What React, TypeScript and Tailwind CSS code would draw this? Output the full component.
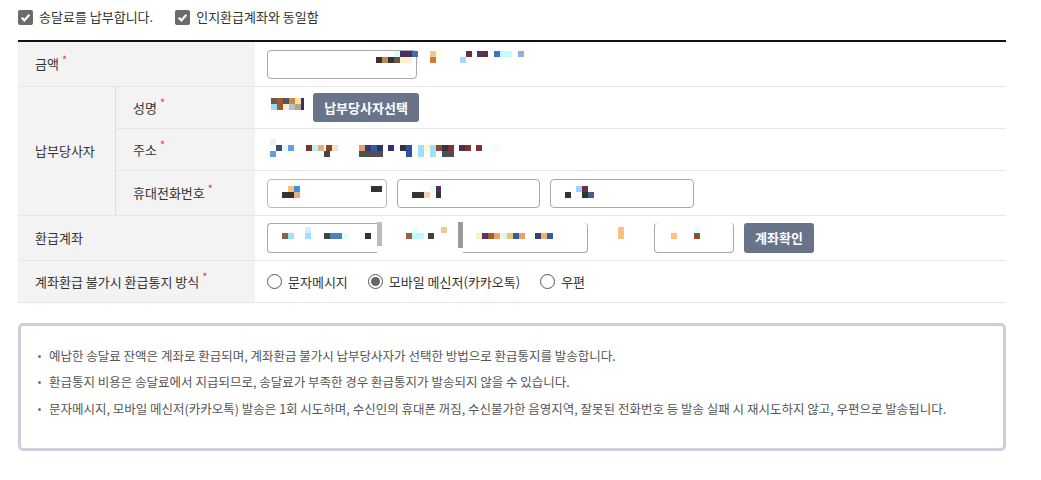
import React from 'react';

type Cell = [number, number, number, string];

// pixelated (masked) personal data, coordinates relative to the content cell
function Mosaic({ cells }: { cells: Cell[] }) {
    return (
        <svg className="absolute inset-0 w-full h-full pointer-events-none" overflow="visible">
            {cells.map(([x, y, w, c], i) => (
                <rect key={i} x={x} y={y} width={w} height={6} fill={c} />
            ))}
        </svg>
    );
}

function Req() {
    return <span className="text-[#e03a3a] text-[11px] ml-[3px] relative -top-[5px]">*</span>;
}

function Check({ label }: { label: string }) {
    return (
        <label className="flex items-center gap-[6px]">
            <span className="shrink-0 w-[15px] h-[15px] rounded-[2px] bg-[#6b6b6b] flex items-center justify-center">
                <svg width="11" height="11" viewBox="0 0 10 10">
                    <path d="M1.5 5.2 L4 7.6 L8.5 2.5" fill="none" stroke="#fff" strokeWidth="2" />
                </svg>
            </span>
            <span>{label}</span>
        </label>
    );
}

function Radio({ label, checked }: { label: string; checked?: boolean }) {
    return (
        <label className="flex items-center gap-[6px] mr-5">
            <span className="shrink-0 w-[15px] h-[15px] rounded-full border border-[#555] bg-white flex items-center justify-center">
                {checked && <span className="w-[9px] h-[9px] rounded-full bg-[#666]" />}
            </span>
            <span>{label}</span>
        </label>
    );
}

const amountCells: Cell[] = [
    [139, 9, 6, '#d8fcff'], [145, 9, 12, '#4a3060'], [157, 9, 6, '#3a70b0'], [175, 9, 6, '#eac8a0'], [181, 9, 6, '#fdfde0'],
    [211, 9, 6, '#603040'], [222, 9, 5, '#4a3a60'], [227, 9, 6, '#603040'], [239, 9, 6, '#3a78c0'], [245, 9, 12, '#c8f8ff'], [263, 9, 6, '#90b0e0'],
    [121, 15, 6, '#333'], [127, 15, 6, '#b88858'], [133, 15, 6, '#333'], [139, 15, 6, '#705040'], [145, 15, 12, '#fdf0c8'],
    [175, 15, 6, '#c88030'], [205, 15, 6, '#a0dcf8'],
];

const nameCells: Cell[] = [
    [16, 11, 6, '#705848'], [22, 11, 6, '#a05830'], [28, 11, 6, '#555'], [34, 11, 6, '#c88838'], [40, 11, 6, '#fde0a0'], [46, 11, 3, '#303070'],
    [16, 17, 6, '#a0d8f8'], [22, 17, 6, '#a05830'], [28, 17, 6, '#fdecd8'], [34, 17, 6, '#a8c8d8'], [40, 17, 6, '#c0a080'], [46, 17, 3, '#303070'],
];

const addrCells: Cell[] = [
    [15, 10, 6, '#eef'], [21, 16, 6, '#3a5070'], [27, 16, 6, '#e0f8ff'], [33, 16, 6, '#60a0e0'], [51, 16, 6, '#803030'], [57, 16, 6, '#c0f0f0'],
    [63, 16, 6, '#e0b080'], [71, 16, 6, '#904030'], [77, 16, 6, '#fde0c0'], [104, 16, 6, '#e0a060'], [110, 16, 6, '#353580'],
    [116, 16, 6, '#3060a0'], [122, 16, 6, '#303070'], [133, 16, 6, '#303080'], [145, 16, 6, '#333'], [151, 16, 6, '#3050a0'],
    [163, 16, 6, '#a0e0ff'], [169, 16, 6, '#fff8c0'], [175, 16, 6, '#a0e0ff'], [181, 16, 6, '#904830'], [187, 16, 6, '#334'],
    [193, 16, 6, '#803030'], [204, 16, 6, '#503048'], [210, 16, 6, '#803030'], [221, 16, 6, '#803030'], [237, 16, 9, '#fbfdf0'],
    [15, 22, 6, '#60a0e0'], [69, 22, 6, '#444'], [104, 22, 24, '#505050'], [151, 22, 6, '#3050a0'], [163, 22, 6, '#a0e0ff'],
    [175, 22, 6, '#a0e0ff'], [187, 22, 12, '#505050'],
];

const phoneCells: Cell[] = [
    [33, 15, 6, '#fdc080'], [39, 15, 6, '#4090e0'], [27, 21, 6, '#334'], [33, 21, 6, '#333'], [39, 21, 6, '#e0b080'], [116, 15, 11, '#333'],
    [157, 21, 12, '#333'], [169, 21, 6, '#f8d0b0'], [175, 15, 6, '#e0ffff'], [181, 15, 5, '#503060'], [181, 21, 5, '#333'],
    [310, 21, 6, '#333'], [321, 15, 6, '#a0d0ff'], [327, 15, 6, '#703040'], [327, 21, 6, '#333'], [333, 21, 6, '#406090'],
];

const acctCells: Cell[] = [
    [27, 17, 6, '#906040'], [33, 17, 6, '#a0e0ff'], [50, 11, 6, '#d0f0ff'], [50, 17, 6, '#a0e0ff'], [69, 17, 6, '#444'], [75, 17, 12, '#5080c0'],
    [87, 17, 6, '#e0ffff'], [110, 17, 6, '#333'], [151, 17, 6, '#a06040'], [157, 17, 12, '#c0f8ff'], [157, 11, 6, '#e0ffff'], [173, 17, 6, '#443'],
    [186, 11, 6, '#f0c8a0'], [221, 17, 6, '#fff0c0'], [227, 17, 6, '#603060'], [233, 17, 6, '#a06030'], [239, 17, 6, '#f0a060'],
    [246, 17, 6, '#d8f8f0'], [252, 17, 6, '#f0c080'], [258, 17, 6, '#3060a0'], [264, 17, 6, '#f0a060'], [280, 17, 6, '#404070'],
    [286, 17, 6, '#f0b070'], [292, 17, 6, '#3060a0'], [363, 11, 6, '#fdc080'], [363, 17, 6, '#fdc080'], [416, 17, 6, '#fdc080'],
    [439, 11, 6, '#e0ffff'], [439, 17, 6, '#905030'],
];

export default function App() {
    const label = 'bg-[#f3f3f3] border-b border-[#e6e6e6] flex items-center pl-[17px]';
    const cell = 'relative bg-white border-b border-[#e6e6e6] flex items-center pl-3';
    const input = 'h-[29px] rounded-[4px] border border-[#a8a8a8] bg-white';

    return (
        <div className="w-[1041px] h-[480px] bg-white text-[13px] text-[#333] font-['Noto_Sans_CJK_KR','Noto_Sans',sans-serif]">
            <div className="flex items-center gap-[22px] px-[18px] h-[33px] pt-px">
                <Check label="송달료를 납부합니다." />
                <Check label="인지환급계좌와 동일함" />
            </div>

            <div className="ml-[18px] w-[988px] mt-[7px] border-t-2 border-[#111] grid grid-cols-[98px_139px_1fr] grid-rows-[45px_42px_42px_45px_45px_42px]">
                <div className={`${label} col-span-2`}>금액<Req /></div>
                <div className={cell}>
                    <div className={`${input} w-[150px]`} />
                    <Mosaic cells={amountCells} />
                </div>

                <div className={`${label} row-span-3 border-r border-r-[#dcdcdc]`}>납부당사자</div>
                <div className={label}>성명<Req /></div>
                <div className={cell}>
                    <button className="ml-[46px] h-[29px] w-[106px] rounded-[3px] bg-[#67748a] text-white font-bold text-[13px]">
                        납부당사자선택
                    </button>
                    <Mosaic cells={nameCells} />
                </div>

                <div className={label}>주소<Req /></div>
                <div className={cell}>
                    <Mosaic cells={addrCells} />
                </div>

                <div className={label}>휴대전화번호<Req /></div>
                <div className={`${cell} gap-[10px]`}>
                    <div className={`${input} w-[120px] border-[#bbb]`} />
                    <div className={`${input} w-[143px]`} />
                    <div className={`${input} w-[144px]`} />
                    <Mosaic cells={phoneCells} />
                </div>

                <div className={`${label} col-span-2`}>환급계좌</div>
                <div className={cell}>
                    <div className={`${input} h-[30px] w-[110px] border-r-0 rounded-r-none`} />
                    <div className="w-[5px] h-[24px] bg-[#bcbcbc] self-start mt-[6px]" />
                    <div className="w-[76px]" />
                    <div className="w-[5px] h-[26px] bg-[#9a9a9a] self-start mt-[6px]" />
                    <div className={`${input} h-[30px] w-[125px] border-l-0 border-t-0 rounded-l-none`} />
                    <div className="w-[66px]" />
                    <div className={`${input} h-[30px] w-[80px] border-t-0`} />
                    <button className="ml-[10px] h-[30px] w-[70px] rounded-[3px] bg-[#67748a] text-white font-bold text-[13px]">
                        계좌확인
                    </button>
                    <Mosaic cells={acctCells} />
                </div>

                <div className={`${label} col-span-2`}>계좌환급 불가시 환급통지 방식<Req /></div>
                <div className={cell}>
                    <Radio label="문자메시지" />
                    <Radio label="모바일 메신저(카카오톡)" checked />
                    <Radio label="우편" />
                </div>
            </div>

            <div className="ml-[18px] w-[988px] mt-[20px] h-[128px] rounded-[5px] border-[3px] border-[#cbd1dc] pl-[17px] pt-[17px] text-[12.5px] text-[#555]">
                {[
                    '예납한 송달료 잔액은 계좌로 환급되며, 계좌환급 불가시 납부당사자가 선택한 방법으로 환급통지를 발송합니다.',
                    '환급통지 비용은 송달료에서 지급되므로, 송달료가 부족한 경우 환급통지가 발송되지 않을 수 있습니다.',
                    '문자메시지, 모바일 메신저(카카오톡) 발송은 1회 시도하며, 수신인의 휴대폰 꺼짐, 수신불가한 음영지역, 잘못된 전화번호 등 발송 실패 시 재시도하지 않고, 우편으로 발송됩니다.',
                ].map((t, i) => (
                    <div key={i} className="flex items-center h-[26.5px]">
                        <span className="shrink-0 w-[3px] h-[3px] rounded-full bg-[#777] mr-[8px]" />
                        <span>{t}</span>
                    </div>
                ))}
            </div>
        </div>
    );
}
